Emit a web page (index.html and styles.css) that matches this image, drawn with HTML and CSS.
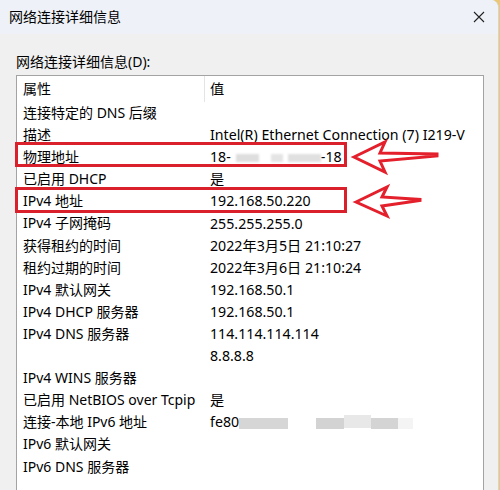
FILE: index.html
```html
<!DOCTYPE html>
<html>
<head>
<meta charset="utf-8">
<link rel="stylesheet" href="styles.css">
</head>
<body>
<div class="window">
  <div class="titlebar">
    <span class="title">网络连接详细信息</span>
    <svg class="close" width="12" height="12" viewBox="0 0 12 12"><path d="M1 1L11 11M11 1L1 11" stroke="#222" stroke-width="1.1" fill="none"/></svg>
  </div>
  <div class="content">
    <div class="label">网络连接详细信息(D):</div>
    <div class="list">
      <div class="row header"><span class="c1">属性</span><span class="c2 hdiv">值</span></div>
      <div class="row"><span class="c1">连接特定的 DNS 后缀</span><span class="c2"></span></div>
      <div class="row"><span class="c1">描述</span><span class="c2">Intel(R) Ethernet Connection (7) I219-V</span></div>
      <div class="row"><span class="c1">物理地址</span><span class="c2">18-<span class="mac"><i class="b1"></i><i class="b2"></i><i class="b3"></i></span>-18</span><span class="mark m1"></span></div>
      <div class="row"><span class="c1">已启用 DHCP</span><span class="c2">是</span></div>
      <div class="row"><span class="c1">IPv4 地址</span><span class="c2">192.168.50.220</span><span class="mark m2"></span></div>
      <div class="row"><span class="c1">IPv4 子网掩码</span><span class="c2">255.255.255.0</span></div>
      <div class="row"><span class="c1">获得租约的时间</span><span class="c2">2022年3月5日 21:10:27</span></div>
      <div class="row"><span class="c1">租约过期的时间</span><span class="c2">2022年3月6日 21:10:24</span></div>
      <div class="row"><span class="c1">IPv4 默认网关</span><span class="c2">192.168.50.1</span></div>
      <div class="row"><span class="c1">IPv4 DHCP 服务器</span><span class="c2">192.168.50.1</span></div>
      <div class="row"><span class="c1">IPv4 DNS 服务器</span><span class="c2">114.114.114.114</span></div>
      <div class="row"><span class="c1"></span><span class="c2">8.8.8.8</span></div>
      <div class="row"><span class="c1">IPv4 WINS 服务器</span><span class="c2"></span></div>
      <div class="row"><span class="c1">已启用 NetBIOS over Tcpip</span><span class="c2">是</span></div>
      <div class="row"><span class="c1">连接-本地 IPv6 地址</span><span class="c2">fe80<span class="v6"><i class="g1"></i><i class="g2"></i><i class="g3"></i><i class="g4"></i><i class="g5"></i></span></span></div>
      <div class="row"><span class="c1">IPv6 默认网关</span><span class="c2"></span></div>
      <div class="row"><span class="c1">IPv6 DNS 服务器</span><span class="c2"></span></div>
      <div class="row"><span class="c1"></span><span class="c2"></span></div>
    </div>
  </div>
  <svg class="arrows" width="500" height="490" viewBox="0 0 500 490">
    <polygon points="354,157 385,142 380,153 437,154 437,156 380,161 385,172" fill="none" stroke="#e3202b" stroke-width="3" stroke-linejoin="miter"/>
    <polygon points="356,202 387,187 382,197 420,199.5 420,200.5 382,206 387,216" fill="none" stroke="#e3202b" stroke-width="3" stroke-linejoin="miter"/>
  </svg>
</div>
</body>
</html>
```

FILE: styles.css
```css
* { box-sizing: border-box; }
html, body { margin: 0; padding: 0; background: #e9c978; }
body { width: 500px; height: 490px; overflow: hidden; }
.window {
  position: relative;
  width: 499px;
  height: 490px;
  background: #f0f0f0;
  border-top-right-radius: 8px;
  border-right: 1px solid #d4d4d4;
  overflow: hidden;
  font-family: "Noto Sans", "Noto Sans CJK SC", sans-serif;
  font-size: 14px;
  color: #000;
}
.titlebar {
  height: 34px;
  background: #eef2f8;
  display: flex;
  align-items: center;
  justify-content: space-between;
  padding: 0 13px 0 9px;
}
.title { font-size: 14px; line-height: 20px; }
.close { display: block; margin-top: 0; }
.content { padding: 0 14px 0 16px; }
.label { height: 41px; padding-top: 18px; line-height: 20px; }
.list {
  background: #fff;
  border: 1px solid #a3a3a3;
  border-bottom: none;
  height: 420px;
}
.row {
  position: relative;
  display: flex;
  height: 22.1px;
  line-height: 22px;
  white-space: nowrap;
}
.row.header { height: 26px; line-height: 26px; }
.c1 { width: 187px; padding-left: 6px; flex: none; }
.c2 { padding-left: 6px; flex: 1; display: flex; align-items: center; font-size: 14.2px; }
.hdiv { border-left: 1px solid #e4e4e4; padding-left: 5px; }
.mac { display: inline-flex; align-items: center; width: 90px; height: 12px; position: relative; margin-top: 2px; }
.mac i { display: block; height: 8px; background: #dedede; filter: blur(1px); }
.mac .b1 { width: 24px; margin-left: 5px; }
.mac .b2 { width: 12px; margin-left: 12px; background: #e4e4e4; }
.mac .b3 { width: 34px; margin-left: 5px; background: #e0e0e0; }
.v6 { display: inline-flex; align-items: center; height: 14px; margin-top: 2px; }
.v6 i { display: block; height: 11px; }
.v6 .g1 { width: 49px; background: #d6d6d6; }
.v6 .g2 { width: 28px; margin-left: 28px; background: #d3d3d3; }
.v6 .g3 { width: 27px; background: #e8e8e8; margin-top: -4px; height: 13px; }
.v6 .g4 { width: 27px; background: #d4d4d4; }
.v6 .g5 { width: 15px; background: #f4f4f4; }
.mark {
  position: absolute;
  left: -2px;
  border: 3px solid #d9202b;
  width: 332px;
}
.m1 { top: -4px; height: 25px; }
.m2 { top: -3px; height: 26px; }
.arrows { position: absolute; left: 0; top: 0; pointer-events: none; }
```
